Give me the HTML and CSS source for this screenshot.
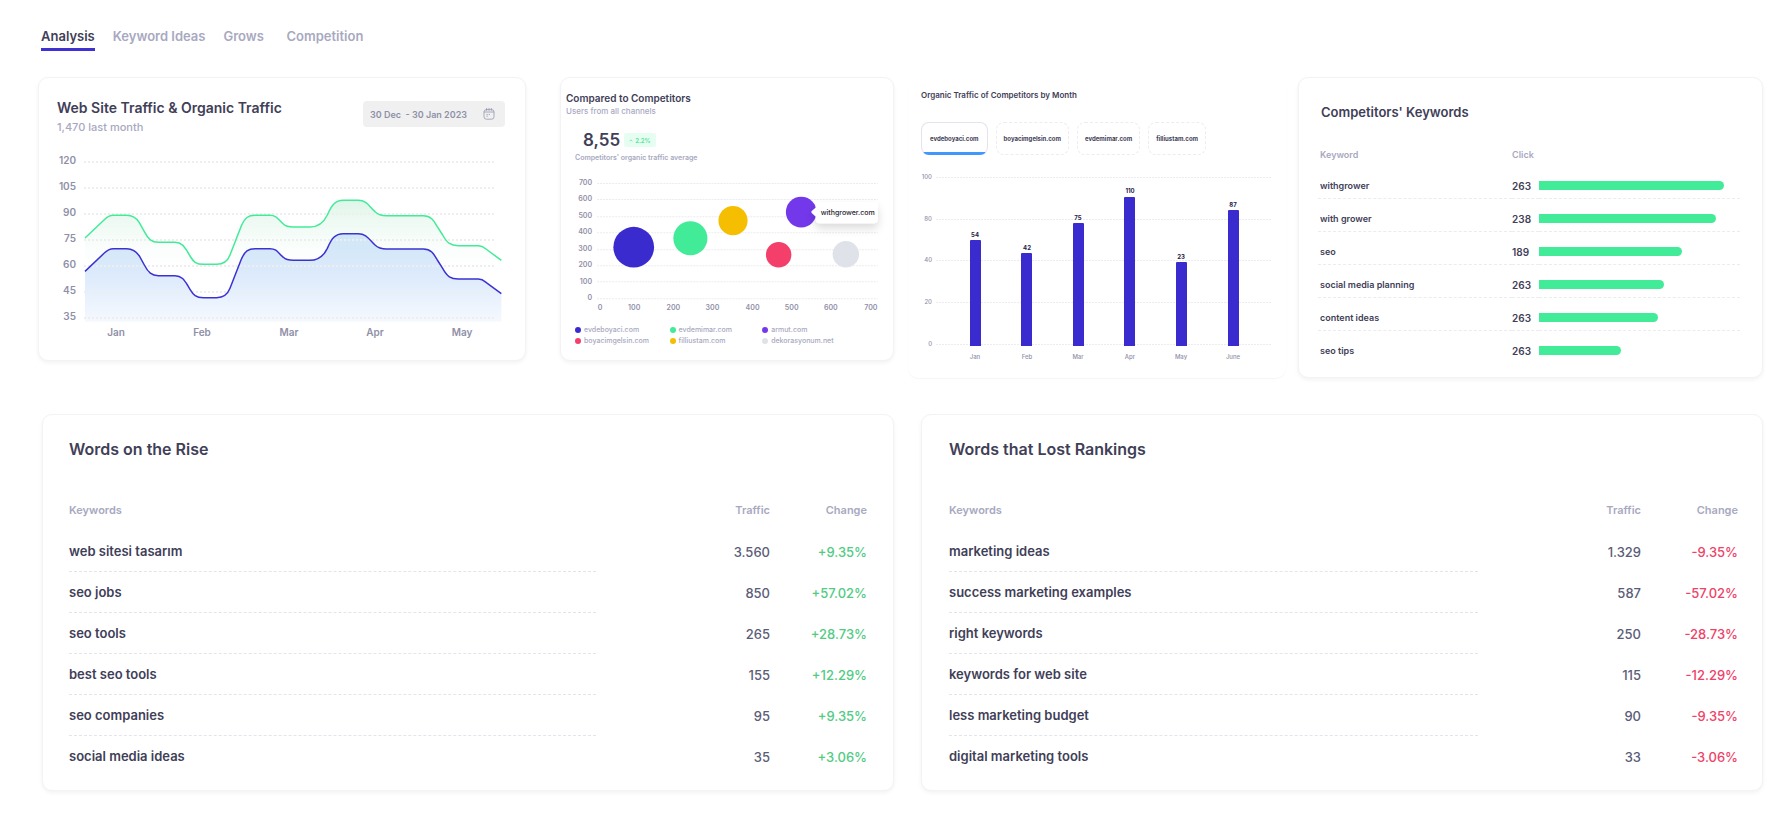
FILE: index.html
```html
<!DOCTYPE html>
<html lang="en">
<head>
<meta charset="utf-8">
<title>Keyword Analysis</title>
<link rel="stylesheet" href="styles.css">
</head>
<body>
<nav class="tabs">
  <a class="tab tab-active" href="#analysis">Analysis</a>
  <a class="tab" href="#ideas">Keyword Ideas</a>
  <a class="tab" href="#grows">Grows</a>
  <a class="tab" href="#competition">Competition</a>
</nav>

<main>
<div class="row-top">
  <section class="card traffic">
    <div class="traffic-head">
      <div>
        <h2 class="title-md">Web Site Traffic &amp; Organic Traffic</h2>
        <p class="sub">1,470 last month</p>
      </div>
      <button class="date" type="button">30 Dec&nbsp; - 30 Jan 2023
        <svg class="date-icon" viewBox="0 0 12 12" aria-hidden="true">
          <rect x="1" y="1.6" width="10" height="9.6" rx="2.4"/>
          <path d="M1.2 4h9.6M3.6.4v2M6 .4v2M8.4.4v2"/>
          <path d="M3.8 6.4h.6M6 6.4h.6M3.8 8.2h.6"/>
        </svg>
      </button>
    </div>
    <svg class="chart chart-line" viewBox="0 0 486 192" role="img" aria-label="Traffic from January to May">
      <defs>
        <linearGradient id="gGreen" x1="0" y1="0" x2="0" y2="1">
          <stop offset="0" stop-color="#dff5e8"/><stop offset=".65" stop-color="#fff" stop-opacity="0"/>
        </linearGradient>
        <linearGradient id="gBlue" x1="0" y1="0" x2="0" y2="1">
          <stop offset="0" stop-color="#cfe6f6"/><stop offset=".5" stop-color="#deebfc"/><stop offset="1" stop-color="#f5f9fe"/>
        </linearGradient>
      </defs>
      <g transform="translate(-9 -10) scale(.33333)">
        <path fill="url(#gGreen)" d="M165 294L222 240C232 230 238 226 250 226L290 226C308 226 318 232 328 248L343 275C355 298 365 307 385 307L435 307C455 307 463 320 473 336L480 348C490 365 498 373 520 373L560 373C580 373 593 363 600 345L633 260C645 232 655 226 675 226L720 226C742 226 745 240 760 252C768 260 775 261 790 261L840 261C865 261 880 250 892 225C905 195 915 181 940 181L985 181C1010 181 1018 200 1035 215C1045 225 1055 227 1070 227L1180 227C1205 227 1213 245 1222 260L1238 285C1252 310 1262 317 1285 317L1345 317C1358 317 1362 322 1372 330L1414 361V545H165Z"/>
        <path fill="url(#gBlue)" d="M165 394L222 340C232 330 238 326 250 326L290 326C308 326 318 332 328 348L343 375C355 398 365 407 385 407L435 407C455 407 463 420 473 436L480 448C490 465 498 473 520 473L560 473C580 473 593 463 600 445L633 360C645 332 655 326 675 326L720 326C742 326 745 340 760 352C768 360 775 361 790 361L840 361C865 361 880 350 892 325C905 295 915 281 940 281L985 281C1010 281 1018 300 1035 315C1045 325 1055 327 1070 327L1180 327C1205 327 1213 345 1222 360L1238 385C1252 410 1262 417 1285 417L1345 417C1358 417 1362 422 1372 430L1414 461V545H165Z"/>
      </g>
      <path class="grid" d="M45 12H457M45 38H457M45 64H457M45 90H457M45 116H457M45 142H457M45 168H457"/>
      <g transform="translate(-9 -10) scale(.33333)" fill="none" stroke-width="4.5">
        <path stroke="#42eb98" d="M165 294L222 240C232 230 238 226 250 226L290 226C308 226 318 232 328 248L343 275C355 298 365 307 385 307L435 307C455 307 463 320 473 336L480 348C490 365 498 373 520 373L560 373C580 373 593 363 600 345L633 260C645 232 655 226 675 226L720 226C742 226 745 240 760 252C768 260 775 261 790 261L840 261C865 261 880 250 892 225C905 195 915 181 940 181L985 181C1010 181 1018 200 1035 215C1045 225 1055 227 1070 227L1180 227C1205 227 1213 245 1222 260L1238 285C1252 310 1262 317 1285 317L1345 317C1358 317 1362 322 1372 330L1414 361"/>
        <path stroke="#3a33d1" d="M165 394L222 340C232 330 238 326 250 326L290 326C308 326 318 332 328 348L343 375C355 398 365 407 385 407L435 407C455 407 463 420 473 436L480 448C490 465 498 473 520 473L560 473C580 473 593 463 600 445L633 360C645 332 655 326 675 326L720 326C742 326 745 340 760 352C768 360 775 361 790 361L840 361C865 361 880 350 892 325C905 295 915 281 940 281L985 281C1010 281 1018 300 1035 315C1045 325 1055 327 1070 327L1180 327C1205 327 1213 345 1222 360L1238 385C1252 410 1262 417 1285 417L1345 417C1358 417 1362 422 1372 430L1414 461"/>
      </g>
      <g class="axis-lg end">
        <text x="37" y="14">120</text><text x="37" y="40">105</text><text x="37" y="66">90</text><text x="37" y="92">75</text><text x="37" y="118">60</text><text x="37" y="144">45</text><text x="37" y="170">35</text>
      </g>
      <g class="axis-lg mid">
        <text x="77" y="186">Jan</text><text x="163" y="186">Feb</text><text x="250" y="186">Mar</text><text x="336" y="186">Apr</text><text x="423" y="186">May</text>
      </g>
    </svg>
  </section>

  <section class="card compared">
    <h2 class="title-xs">Compared to Competitors</h2>
    <p class="note">Users from all channels</p>
    <div class="stat"><strong class="stat-value">8,55</strong>
      <span class="badge"><svg class="badge-icon" viewBox="0 0 4 3" aria-hidden="true"><path d="M.5 2.3L2 .8L3.5 2.3"/></svg>2.2%</span></div>
    <p class="note note-in">Competitors' organic traffic average</p>
    <svg class="chart chart-bubble" viewBox="0 0 331 143" role="img" aria-label="Organic traffic of competitors">
      <defs>
        <filter id="tipShadow" x="-30%" y="-30%" width="160%" height="220%"><feDropShadow dx="0" dy="5" stdDeviation="4" flood-color="#000" flood-opacity=".14"/></filter>
      </defs>
      <path class="grid-thin" d="M36 10.5H316M36 26.5H316M36 43.5H316M36 59.5H316M36 76.5H316M36 92.5H316M36 108.5H316M36 125.5H316"/>
      <circle cx="72.5" cy="74" r="20.3" fill="#3a2bce"/>
      <circle cx="129" cy="65" r="17" fill="#42eb98"/>
      <circle cx="171.5" cy="47.5" r="14.5" fill="#f6be00"/>
      <circle cx="239.5" cy="39" r="15.3" fill="#7338ea"/>
      <circle cx="217" cy="81.5" r="12.7" fill="#f33f6a"/>
      <circle cx="284" cy="81" r="13.2" fill="#dfe2e9"/>
      <path fill="#fff" filter="url(#tipShadow)" d="M258 29H312Q316 29 316 33V46Q316 50 312 50H258Q254 50 254 46V43.5L250 40Q249 39 250 38L254 34.5V33Q254 29 258 29Z"/>
      <text class="tip-text" x="259" y="42">withgrower.com</text>
      <g class="axis-md end">
        <text x="31" y="12">700</text><text x="31" y="28">600</text><text x="31" y="45">500</text><text x="31" y="61">400</text><text x="31" y="78">300</text><text x="31" y="94">200</text><text x="31" y="111">100</text><text x="31" y="127">0</text>
      </g>
      <g class="axis-md mid">
        <text x="39" y="137">0</text><text x="73" y="137">100</text><text x="112" y="137">200</text><text x="151" y="137">300</text><text x="191" y="137">400</text><text x="230" y="137">500</text><text x="269" y="137">600</text><text x="309" y="137">700</text>
      </g>
    </svg>
    <ul class="legend">
      <li><i class="dot dot-blue"></i>evdeboyaci.com</li><li><i class="dot dot-green"></i>evdemimar.com</li><li><i class="dot dot-violet"></i>armut.com</li>
      <li><i class="dot dot-red"></i>boyacimgelsin.com</li><li><i class="dot dot-yellow"></i>filliustam.com</li><li><i class="dot dot-grey"></i>dekorasyonum.net</li>
    </ul>
  </section>

  <section class="card monthly">
    <h2 class="title-xxs">Organic Traffic of Competitors by Month</h2>
    <div class="chips">
      <button class="chip chip-active" type="button">evdeboyaci.com</button>
      <button class="chip" type="button">boyacimgelsin.com</button>
      <button class="chip" type="button">evdemimar.com</button>
      <button class="chip" type="button">filliustam.com</button>
    </div>
    <svg class="chart chart-bars" viewBox="0 0 376 197" role="img" aria-label="Organic traffic by month">
      <path class="grid-thin" d="M27 9.5H362M27 51.5H362M27 92.5H362M27 134.5H362M27 176.5H362"/>
      <g fill="#3a2bce">
        <path d="M61 178V73q0-1 1-1h9q1 0 1 1V178Z"/>
        <path d="M112 178V86q0-1 1-1h9q1 0 1 1V178Z"/>
        <path d="M164 178V56q0-1 1-1h9q1 0 1 1V178Z"/>
        <path d="M215 178V30q0-1 1-1h9q1 0 1 1V178Z"/>
        <path d="M267 178V95q0-1 1-1h9q1 0 1 1V178Z"/>
        <path d="M319 178V43q0-1 1-1h9q1 0 1 1V178Z"/>
      </g>
      <g class="bar-value mid">
        <text x="66" y="69">54</text><text x="118" y="82">42</text><text x="169" y="52">75</text><text x="221" y="25">110</text><text x="272" y="91">23</text><text x="324" y="39">87</text>
      </g>
      <g class="axis-sm end">
        <text x="23" y="11">100</text><text x="23" y="53">80</text><text x="23" y="94">40</text><text x="23" y="136">20</text><text x="23" y="178">0</text>
      </g>
      <g class="axis-sm mid">
        <text x="66" y="191">Jan</text><text x="118" y="191">Feb</text><text x="169" y="191">Mar</text><text x="221" y="191">Apr</text><text x="272" y="191">May</text><text x="324" y="191">June</text>
      </g>
    </svg>
  </section>

  <section class="card clicks">
    <h2 class="title-sm">Competitors' Keywords</h2>
    <table class="clicks-table">
      <thead><tr><th class="col-word">Keyword</th><th class="col-count">Click</th><th class="col-bar"></th></tr></thead>
      <tbody>
        <tr><td>withgrower</td><td class="count">263</td><td><div class="bar" style="width:92%"></div></td></tr>
        <tr><td>with grower</td><td class="count">238</td><td><div class="bar" style="width:88%"></div></td></tr>
        <tr><td>seo</td><td class="count">189</td><td><div class="bar" style="width:71%"></div></td></tr>
        <tr><td>social media planning</td><td class="count">263</td><td><div class="bar" style="width:62%"></div></td></tr>
        <tr><td>content ideas</td><td class="count">263</td><td><div class="bar" style="width:59%"></div></td></tr>
        <tr><td>seo tips</td><td class="count">263</td><td><div class="bar" style="width:41%"></div></td></tr>
      </tbody>
    </table>
  </section>
</div>

<div class="row-bottom">
  <section class="card words">
    <h2 class="title-lg">Words on the Rise</h2>
    <table class="words-table">
      <thead><tr><th class="w-word">Keywords</th><th class="w-num">Traffic</th><th class="w-change">Change</th></tr></thead>
      <tbody class="up">
        <tr><td>web sitesi tasarım</td><td>3.560</td><td>+9.35%</td></tr>
        <tr><td>seo jobs</td><td>850</td><td>+57.02%</td></tr>
        <tr><td>seo tools</td><td>265</td><td>+28.73%</td></tr>
        <tr><td>best seo tools</td><td>155</td><td>+12.29%</td></tr>
        <tr><td>seo companies</td><td>95</td><td>+9.35%</td></tr>
        <tr><td>social media ideas</td><td>35</td><td>+3.06%</td></tr>
      </tbody>
    </table>
  </section>
  <section class="card words words-lost">
    <h2 class="title-lg">Words that Lost Rankings</h2>
    <table class="words-table">
      <thead><tr><th class="w-word">Keywords</th><th class="w-num">Traffic</th><th class="w-change">Change</th></tr></thead>
      <tbody class="down">
        <tr><td>marketing ideas</td><td>1.329</td><td>-9.35%</td></tr>
        <tr><td>success marketing examples</td><td>587</td><td>-57.02%</td></tr>
        <tr><td>right keywords</td><td>250</td><td>-28.73%</td></tr>
        <tr><td>keywords for web site</td><td>115</td><td>-12.29%</td></tr>
        <tr><td>less marketing budget</td><td>90</td><td>-9.35%</td></tr>
        <tr><td>digital marketing tools</td><td>33</td><td>-3.06%</td></tr>
      </tbody>
    </table>
  </section>
</div>
</main>
</body>
</html>
```
FILE: styles.css
```css
* { box-sizing: border-box; }
body {
  margin: 0;
  padding: 26px 20px 24px 38px;
  background: #fff;
  color: #3f4058;
  font-family: Inter, "Liberation Sans", sans-serif;
}
h2, p, ul { margin: 0; padding: 0; font-weight: 600; }
button { font-family: inherit; cursor: pointer; }

.tabs { display: flex; gap: 18px; padding-left: 3px; }
.tab {
  min-width: 45px;
  padding-bottom: 2px;
  border-bottom: 3px solid transparent;
  color: #a8a9bf;
  font-size: 13px;
  font-weight: 600;
  line-height: 20px;
  text-decoration: none;
}
.tab-active { color: #3f4058; border-image: linear-gradient(#3f30d4, #3f30d4) 1; }

.row-top {
  display: grid;
  grid-template-columns: minmax(0, 488fr) minmax(0, 368fr) minmax(0, 392fr) minmax(0, 477fr);
  margin-top: 26px;
}
.row-bottom {
  display: grid;
  grid-template-columns: minmax(0, 852fr) minmax(0, 869fr);
  margin-top: 36px;
  padding-left: 4px;
}
.card {
  min-width: 0;
  border: 1px solid #f3f3f5;
  border-radius: 10px;
  background: #fff;
  box-shadow: 0 2px 4px rgba(20, 20, 50, .05);
}
.title-lg { font-size: 16px; line-height: 24px; }
.title-md { font-size: 14px; line-height: 20px; }
.title-sm { padding-left: 3px; font-size: 13px; line-height: 20px; }
.title-xs { font-size: 10px; line-height: 14px; }
.title-xxs { padding-left: 12px; font-size: 8px; line-height: 14px; }
.sub { color: #a8a9bf; font-size: 11px; line-height: 18px; font-weight: 500; }
.note { color: #a8a9bf; font-size: 8px; line-height: 12px; font-weight: 500; }
.note-in { padding-left: 9px; font-size: 7px; font-weight: 600; }

.chart { display: block; width: 100%; height: auto; }
.grid { stroke: #eeeef1; stroke-width: 2; stroke-dasharray: 2 2; fill: none; }
.grid-thin { stroke: #ececf0; stroke-width: 1; stroke-dasharray: 2 1; fill: none; }
.axis-lg { font-size: 10px; font-weight: 600; fill: #8f90a8; }
.axis-md { font-size: 7px; font-weight: 600; fill: #8f90a8; }
.axis-sm { font-size: 6px; font-weight: 500; fill: #8f90a8; }
.bar-value { font-size: 6px; font-weight: 700; fill: #24244a; }
.tip-text { font-size: 7px; font-weight: 500; fill: #26262e; }
.end { text-anchor: end; }
.mid { text-anchor: middle; }

.traffic { align-self: start; padding: 20px 0 18px; }
.traffic-head {
  display: flex;
  justify-content: space-between;
  align-items: flex-start;
  padding: 0 20px 0 18px;
}
.date {
  display: flex;
  align-items: center;
  gap: 16px;
  height: 26px;
  margin-top: 3px;
  padding: 0 10px 0 7px;
  border: 0;
  border-radius: 4px;
  background: #f0f0f0;
  color: #8f90a8;
  font-size: 9px;
  font-weight: 600;
}
.date-icon { width: 12px; height: 12px; fill: none; stroke: #9798ae; stroke-width: .8; stroke-linecap: round; }
.chart-line { margin-top: 14px; }

.compared { align-self: start; margin-left: 34px; padding: 13px 0 14px; }
.compared > .title-xs, .compared > .note { margin-left: 5px; }
.stat { display: flex; align-items: center; gap: 4px; margin-top: 11px; padding-left: 22px; }
.stat-value { font-size: 17px; line-height: 24px; font-weight: 600; }
.badge {
  display: flex;
  align-items: center;
  gap: 2px;
  height: 14px;
  padding: 0 5px;
  border-radius: 2px;
  background: #e6fdf1;
  color: #55e39c;
  font-size: 6px;
  font-weight: 600;
}
.badge-icon { width: 4px; height: 3px; fill: none; stroke: #55e39c; stroke-width: .7; }
.chart-bubble { margin-top: 9px; }
.legend {
  display: grid;
  grid-template-columns: 94fr 92fr 130fr;
  row-gap: 1px;
  margin-top: 9px;
  padding-left: 14px;
  list-style: none;
}
.legend li { display: flex; align-items: center; gap: 3px; color: #a8a9bf; font-size: 7px; font-weight: 500; line-height: 10px; }
.dot { width: 6px; height: 6px; border-radius: 50%; }
.dot-blue { background: #3a2bce; }
.dot-green { background: #42eb98; }
.dot-violet { background: #7338ea; }
.dot-red { background: #f33f6a; }
.dot-yellow { background: #f6be00; }
.dot-grey { background: #dfe2e9; }

.monthly {
  margin-left: 14px;
  padding: 10px 0 11px;
  border-color: transparent;
  box-shadow: 0 1px 1px rgba(20, 20, 50, .04);
}
.chips { display: flex; gap: 8px; margin-top: 20px; padding-left: 12px; }
.chip {
  height: 33px;
  padding: 0 7px;
  border: 1px dashed #ececf1;
  border-radius: 8px;
  background: #fff;
  color: #3f4058;
  font-size: 6px;
  font-weight: 700;
}
.chip-active {
  padding: 0 8px;
  border: 1px solid #e3e3ec;
  border-bottom-color: #4297ff;
  background: linear-gradient(#4297ff, #4297ff) bottom / 100% 2px no-repeat #fff;
}
.chart-bars { margin-top: 13px; }

.clicks { margin-left: 12px; padding: 24px 22px 13px 19px; }
.clicks-table, .words-table { width: 100%; border-collapse: separate; border-spacing: 0; table-layout: fixed; }
.clicks-table { margin-top: 21px; }
.clicks-table th { height: 23px; padding: 0 0 0 2px; color: #a8a9bf; font-size: 9px; font-weight: 600; text-align: left; }
.clicks-table td { height: 33px; padding: 7px 0 0 2px; border-bottom: 1px dashed #ebebf0; font-size: 9px; font-weight: 600; }
.clicks-table tr:last-child td { border-bottom-color: transparent; }
.clicks-table .count, .clicks-table .col-count { padding-left: 0; }
.clicks-table .count { font-size: 10px; }
.clicks-table td:last-child { padding-left: 0; }
.col-word { width: 46%; }
.col-count { width: 27px; }
.bar { height: 9px; border-radius: 0 5px 5px 0; background: #42eb98; }

.words { padding: 22px 26px 13px; }
.words-lost { margin-left: 27px; padding-right: 24px; padding-left: 27px; }
.words-table { margin-top: 27px; }
.words-table th { height: 43px; padding: 0; color: #a8a9bf; font-size: 11px; font-weight: 600; text-align: right; }
.words-table td { height: 41px; padding: 0; color: #5b5c77; font-size: 13px; font-weight: 500; text-align: right; }
.words-table th:first-child, .words-table td:first-child { text-align: left; }
.words-table td:first-child { border-bottom: 1px dashed #e4e4ec; color: #3f4058; font-weight: 600; }
.words-table tr:last-child td:first-child { border-bottom-color: transparent; }
.w-word { width: 66%; }
.words-lost .w-word { width: 67%; }
.w-change { width: 97px; }
.words-table .up td:last-child { color: #52cb83; }
.words-table .down td:last-child { color: #ef4268; }
```
